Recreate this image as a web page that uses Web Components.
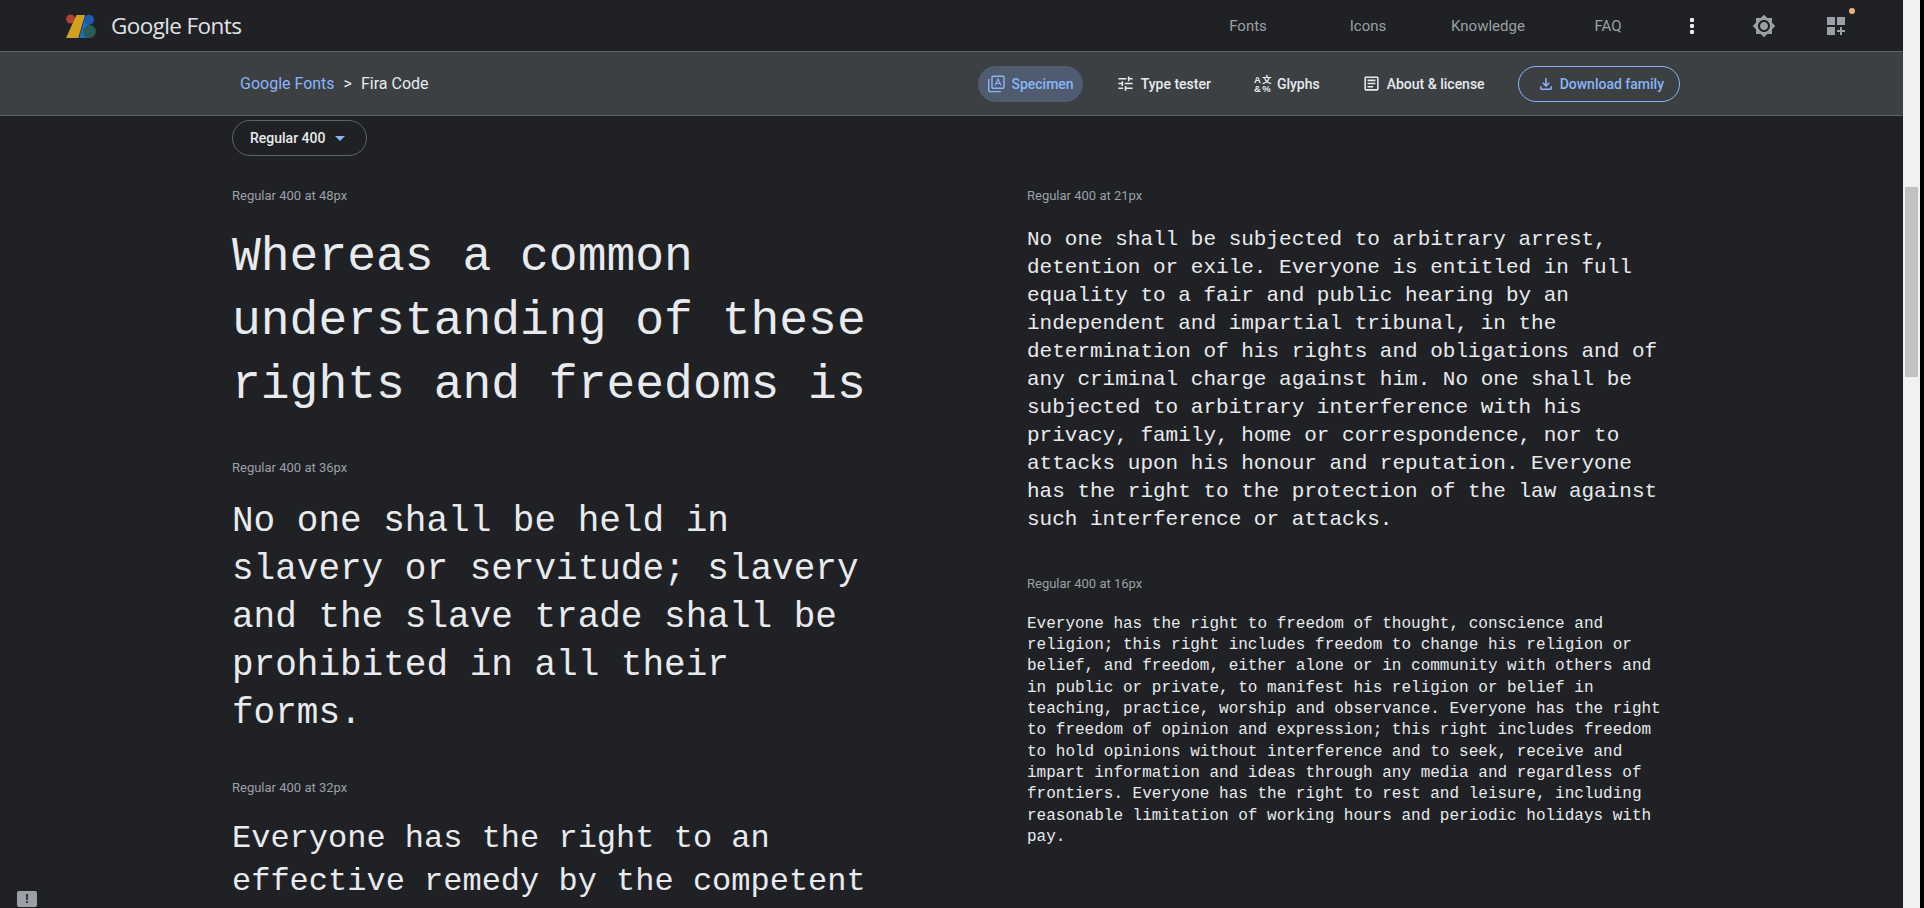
<!DOCTYPE html>
<html>
<head>
<meta charset="utf-8">
<title>Fira Code - Google Fonts</title>
<style>
    html, body { margin: 0; height: 100%; overflow: hidden; background: #000; }
</style>
</head>
<body>
<gf-app>
    <gf-topbar></gf-topbar>
    <gf-subbar>
        <gf-tab active label="Specimen"><svg viewBox="0 0 18 18" width="18" height="18" fill="none" stroke="currentColor" stroke-width="1.4"><rect x="5" y="1.2" width="12" height="12" rx="1.2"/><path d="M1.7 4v11.3a1.3 1.3 0 0 0 1.3 1.3h11"/><path d="M8 10.5 11 4l3 6.500M9 8.400h4" stroke-width="1.100"/></svg></gf-tab>
        <gf-tab label="Type tester"><svg viewBox="0 0 24 24" width="19" height="19" fill="currentColor"><path d="M3 17v2h6v-2H3zM3 5v2h10V5H3zm10 16v-2h8v-2h-8v-2h-2v6h2zM7 9v2H3v2h4v2h2V9H7zm14 4v-2H11v2h10zm-6-4h2V7h4V5h-4V3h-2v6z"/></svg></gf-tab>
        <gf-tab label="Glyphs"><gf-glyphs-icon></gf-glyphs-icon></gf-tab>
        <gf-tab label="About &amp; license"><svg viewBox="0 0 24 24" width="19" height="19" fill="currentColor"><path d="M19 5v14H5V5h14m0-2H5c-1.100 0-2 .9-2 2v14c0 1.100.9 2 2 2h14c1.100 0 2-.9 2-2V5c0-1.100-.9-2-2-2z"/><path d="M14 17H7v-2h7v2zm3-4H7v-2h10v2zm0-4H7V7h10v2z"/></svg></gf-tab>
        <gf-download></gf-download>
    </gf-subbar>
    <gf-main>
        <gf-select slot="select">Regular 400</gf-select>
        <gf-sample slot="left" size="48" label="Regular 400 at 48px">Whereas a common understanding of these rights and freedoms is</gf-sample>
        <gf-sample slot="left" size="36" label="Regular 400 at 36px">No one shall be held in slavery or servitude; slavery and the slave trade shall be prohibited in all their forms.</gf-sample>
        <gf-sample slot="left" size="32" label="Regular 400 at 32px">Everyone has the right to an effective remedy by the competent national tribunals for acts</gf-sample>
        <gf-sample slot="right" size="21" label="Regular 400 at 21px">No one shall be subjected to arbitrary arrest, detention or exile. Everyone is entitled in full equality to a fair and public hearing by an independent and impartial tribunal, in the determination of his rights and obligations and of any criminal charge against him. No one shall be subjected to arbitrary interference with his privacy, family, home or correspondence, nor to attacks upon his honour and reputation. Everyone has the right to the protection of the law against such interference or attacks.</gf-sample>
        <gf-sample slot="right" size="16" label="Regular 400 at 16px">Everyone has the right to freedom of thought, conscience and religion; this right includes freedom to change his religion or belief, and freedom, either alone or in community with others and in public or private, to manifest his religion or belief in teaching, practice, worship and observance. Everyone has the right to freedom of opinion and expression; this right includes freedom to hold opinions without interference and to seek, receive and impart information and ideas through any media and regardless of frontiers. Everyone has the right to rest and leisure, including reasonable limitation of working hours and periodic holidays with pay.</gf-sample>
    </gf-main>
    <gf-feedback></gf-feedback>
    <gf-scrollbar></gf-scrollbar>
</gf-app>

<script>
const UI_FONT = `Roboto, "Liberation Sans", sans-serif`;

class GfApp extends HTMLElement {
    constructor() {
        super();
        this.attachShadow({ mode: 'open' });
        this.shadowRoot.innerHTML = `
            <style>
                :host { display: flex; width: 1924px; height: 908px; overflow: hidden; background: #000; font-family: ${UI_FONT}; }
                .page { position: relative; width: 1903px; height: 908px; overflow: hidden; display: flex; flex-direction: column; background: #202124; }
                .side { width: 17px; }
            </style>
            <div class="page"><slot></slot></div>
            <div class="side"><slot name="bar"></slot></div>
        `;
    }
    connectedCallback() {
        this.querySelector('gf-scrollbar').slot = 'bar';
    }
}

class GfTopbar extends HTMLElement {
    constructor() {
        super();
        this.attachShadow({ mode: 'open' });
        this.shadowRoot.innerHTML = `
            <style>
                :host { display: flex; align-items: center; height: 51px; border-bottom: 1px solid #5f6368; background: #202124; padding: 0 43px 0 66px; flex: none; }
                .logo { display: flex; align-items: center; gap: 14px; }
                .word { font: 400 22.500px "Open Sans", sans-serif; color: #e0e2e5; letter-spacing: -.6px; }
                nav { margin-left: auto; display: flex; align-items: center; }
                a { width: 120px; text-align: center; font-size: 15px; color: #9aa0a6; }
                .btn { width: 48px; display: flex; justify-content: center; position: relative; }
                .btn + .btn { margin-left: 24px; }
                .dot { position: absolute; left: 37px; top: -9px; width: 6px; height: 6px; border-radius: 50%; background: #e6b779; }
            </style>
            <div class="logo">
                <svg width="31" height="26" viewBox="66 7 31 26">
                    <circle cx="70.700" cy="13" r="4.600" fill="#ad4332"/>
                    <polygon points="66,32 78.300,32 85,9 76.500,9" fill="#d2a11f"/>
                    <polygon points="79,32 85.300,10 89,9 89,32" fill="#1a6fc4"/>
                    <circle cx="89" cy="13.700" r="5" fill="#1a5cab"/>
                    <circle cx="89.500" cy="25.500" r="6.500" fill="#2b5d54"/>
                </svg>
                <span class="word">Google Fonts</span>
            </div>
            <nav>
                <a>Fonts</a><a>Icons</a><a>Knowledge</a><a>FAQ</a>
                <div class="btn">
                    <svg width="6" height="18" viewBox="0 0 6 18" fill="#e8eaed"><rect x="1" y="1" width="4" height="4" rx="1"/><rect x="1" y="7" width="4" height="4" rx="1"/><rect x="1" y="13" width="4" height="4" rx="1"/></svg>
                </div>
                <div class="btn">
                    <svg width="24" height="24" viewBox="0 0 24 24" fill="#9aa0a6"><path d="M20 8.690V4h-4.690L12 .69 8.690 4H4v4.690L.69 12 4 15.310V20h4.690L12 23.310 15.310 20H20v-4.690L23.310 12 20 8.690zM12 18c-3.310 0-6-2.690-6-6s2.690-6 6-6 6 2.690 6 6-2.690 6-6 6zm0-10c-2.210 0-4 1.790-4 4s1.790 4 4 4 4-1.790 4-4-1.790-4-4-4z"/></svg>
                </div>
                <div class="btn">
                    <svg width="18" height="18" viewBox="0 0 18 18" fill="#9aa0a6"><rect width="8" height="8"/><rect x="10" width="8" height="8"/><rect y="10" width="8" height="8"/><path d="M13 10h2v3h3v2h-3v3h-2v-3h-3v-2h3z"/></svg>
                    <span class="dot"></span>
                </div>
            </nav>
        `;
    }
}

class GfSubbar extends HTMLElement {
    constructor() {
        super();
        this.attachShadow({ mode: 'open' });
        this.shadowRoot.innerHTML = `
            <style>
                :host { display: flex; align-items: center; height: 63px; flex: none; background: #3c4043; border-bottom: 1px solid #5f6368; padding: 0 223px 0 240px; font-size: 16px; }
                .crumb { color: #e8eaed; white-space: nowrap; }
                .crumb a { color: #8ab4f8; }
                .crumb i { font-style: normal; margin: 0 9px; }
                .tabs { margin-left: auto; display: flex; align-items: center; gap: 24px; }
            </style>
            <div class="crumb"><a>Google Fonts</a><i>&gt;</i>Fira Code</div>
            <div class="tabs"><slot></slot></div>
        `;
    }
}

class GfTab extends HTMLElement {
    constructor() {
        super();
        this.attachShadow({ mode: 'open' });
        this.shadowRoot.innerHTML = `
            <style>
                :host { display: flex; align-items: center; gap: 6px; height: 36px; padding: 0 9px; border-radius: 18px; color: #e8eaed; font-size: 14px; font-weight: 500; white-space: nowrap; }
                :host([active]) { background: #4f5b6e; color: #8ab4f8; }
                ::slotted(*) { flex: none; }
            </style>
            <slot></slot><span class="t"></span>
        `;
    }
    connectedCallback() {
        this.shadowRoot.querySelector('.t').textContent = this.getAttribute('label');
    }
}

class GfGlyphsIcon extends HTMLElement {
    constructor() {
        super();
        this.attachShadow({ mode: 'open' });
        this.shadowRoot.innerHTML = `
            <style>
                :host { display: grid; grid-template-columns: 9px 9px; width: 18px; height: 18px; font: 700 9.500px/9px "Liberation Sans", "Noto Sans CJK SC", sans-serif; text-align: center; color: #e8eaed; }
            </style>
            <span>A</span><span>文</span><span>&amp;</span><span>%</span>
        `;
    }
}

class GfDownload extends HTMLElement {
    constructor() {
        super();
        this.attachShadow({ mode: 'open' });
        this.shadowRoot.innerHTML = `
            <style>
                :host { display: flex; align-items: center; gap: 5px; box-sizing: border-box; height: 36px; padding: 0 15px 0 18px; border: 1px solid #8ab4f8; border-radius: 18px; color: #8ab4f8; font-size: 14px; font-weight: 500; white-space: nowrap; }
            </style>
            <svg width="18" height="18" viewBox="0 0 24 24" fill="currentColor"><path d="M12 16l-5-5 1.400-1.450L11 12.150V4h2v8.150l2.600-2.600L17 11l-5 5zM6 20c-.55 0-1.020-.2-1.410-.59A1.930 1.930 0 0 1 4 18v-3h2v3h12v-3h2v3c0 .55-.2 1.020-.59 1.410-.39.39-.86.59-1.410.59H6z"/></svg>
            Download family
        `;
    }
}

class GfMain extends HTMLElement {
    constructor() {
        super();
        this.attachShadow({ mode: 'open' });
        this.shadowRoot.innerHTML = `
            <style>
                :host { display: block; flex: 1; min-height: 0; overflow: hidden; padding: 4px 0 0 232px; }
                .cols { display: grid; grid-template-columns: 636px 636px; column-gap: 159px; margin-top: 30px; }
            </style>
            <slot name="select"></slot>
            <div class="cols">
                <div><slot name="left"></slot></div>
                <div><slot name="right"></slot></div>
            </div>
        `;
    }
}

class GfSelect extends HTMLElement {
    constructor() {
        super();
        this.attachShadow({ mode: 'open' });
        this.shadowRoot.innerHTML = `
            <style>
                :host { display: inline-flex; align-items: center; box-sizing: border-box; width: 135px; height: 36px; padding-left: 17px; border: 1px solid #5f6368; border-radius: 18px; color: #e8eaed; font-size: 14px; font-weight: 500; white-space: nowrap; vertical-align: top; }
                i { margin-left: 10px; border: 5px solid transparent; border-top-color: #8ab4f8; border-bottom: 0; }
            </style>
            <slot></slot><i></i>
        `;
    }
}

class GfSample extends HTMLElement {
    constructor() {
        super();
        this.attachShadow({ mode: 'open' });
        this.shadowRoot.innerHTML = `
            <style>
                :host { display: block; margin-bottom: 40px; }
                .label { height: 20px; line-height: 20px; font-size: 13px; color: #9aa0a6; margin-bottom: 20px; }
                .text { font-family: "Liberation Mono", monospace; color: #e8eaed; line-height: 1.3333; }
            </style>
            <div class="label"></div>
            <div class="text"><slot></slot></div>
        `;
    }
    connectedCallback() {
        this.shadowRoot.querySelector('.label').textContent = this.getAttribute('label');
        this.shadowRoot.querySelector('.text').style.fontSize = this.getAttribute('size') + 'px';
    }
}

class GfFeedback extends HTMLElement {
    constructor() {
        super();
        this.attachShadow({ mode: 'open' });
        this.shadowRoot.innerHTML = `
            <style>
                :host { position: absolute; left: 17px; top: 891px; display: block; width: 20px; height: 16px; border-radius: 2px; background: #9aa0a6; color: #202124; font: 700 12px/16px "Liberation Sans", sans-serif; text-align: center; }
            </style>
            !
        `;
    }
}

class GfScrollbar extends HTMLElement {
    constructor() {
        super();
        this.attachShadow({ mode: 'open' });
        this.shadowRoot.innerHTML = `
            <style>
                :host { display: block; height: 908px; background: #f1f1f1; padding: 187px 2px 0; box-sizing: border-box; }
                div { height: 190px; background: #c1c1c1; }
            </style>
            <div></div>
        `;
    }
}

customElements.define('gf-app', GfApp);
customElements.define('gf-topbar', GfTopbar);
customElements.define('gf-subbar', GfSubbar);
customElements.define('gf-tab', GfTab);
customElements.define('gf-glyphs-icon', GfGlyphsIcon);
customElements.define('gf-download', GfDownload);
customElements.define('gf-main', GfMain);
customElements.define('gf-select', GfSelect);
customElements.define('gf-sample', GfSample);
customElements.define('gf-feedback', GfFeedback);
customElements.define('gf-scrollbar', GfScrollbar);
</script>
</body>
</html>
